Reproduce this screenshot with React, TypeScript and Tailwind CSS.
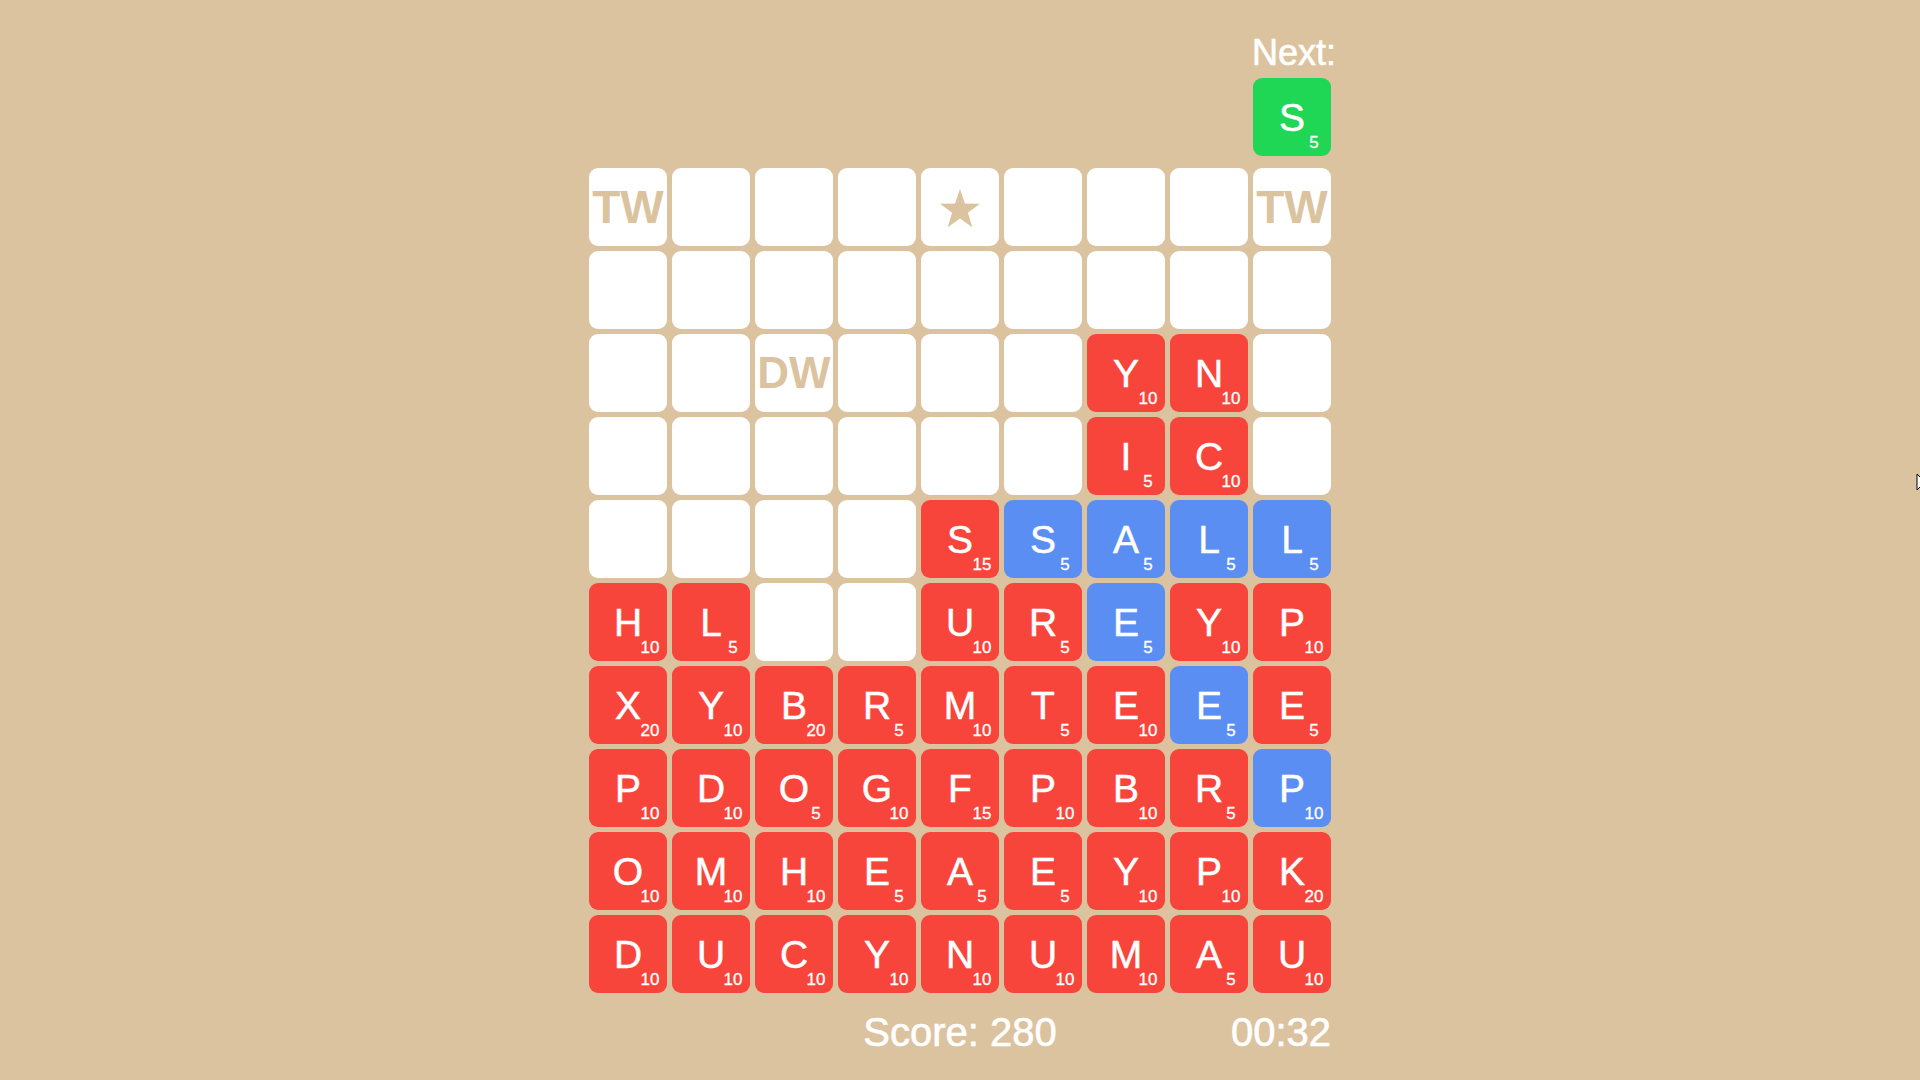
import React from "react";

type Cell =
  | { t: "empty" }
  | { t: "tw" }
  | { t: "dw" }
  | { t: "star" }
  | { t: "tile"; l: string; n: number; c: "r" | "b" };

const E: Cell = { t: "empty" };
const TW: Cell = { t: "tw" };
const DW: Cell = { t: "dw" };
const ST: Cell = { t: "star" };
const r = (l: string, n: number): Cell => ({ t: "tile", l, n, c: "r" });
const b = (l: string, n: number): Cell => ({ t: "tile", l, n, c: "b" });

const grid: Cell[][] = [
  [TW, E, E, E, ST, E, E, E, TW],
  [E, E, E, E, E, E, E, E, E],
  [E, E, DW, E, E, E, r("Y", 10), r("N", 10), E],
  [E, E, E, E, E, E, r("I", 5), r("C", 10), E],
  [E, E, E, E, r("S", 15), b("S", 5), b("A", 5), b("L", 5), b("L", 5)],
  [r("H", 10), r("L", 5), E, E, r("U", 10), r("R", 5), b("E", 5), r("Y", 10), r("P", 10)],
  [r("X", 20), r("Y", 10), r("B", 20), r("R", 5), r("M", 10), r("T", 5), r("E", 10), b("E", 5), r("E", 5)],
  [r("P", 10), r("D", 10), r("O", 5), r("G", 10), r("F", 15), r("P", 10), r("B", 10), r("R", 5), b("P", 10)],
  [r("O", 10), r("M", 10), r("H", 10), r("E", 5), r("A", 5), r("E", 5), r("Y", 10), r("P", 10), r("K", 20)],
  [r("D", 10), r("U", 10), r("C", 10), r("Y", 10), r("N", 10), r("U", 10), r("M", 10), r("A", 5), r("U", 10)],
];

function LetterTile({ l, n, bg }: { l: string; n: number; bg: string }) {
  return (
    <div className={`relative w-[78px] h-[78px] rounded-[9px] flex items-center justify-center text-white ${bg}`}>
      <span className="text-[39px] leading-none [-webkit-text-stroke:0.5px_white]">{l}</span>
      <span className="absolute right-0 bottom-[5px] w-[34px] text-center text-[17px] leading-none [-webkit-text-stroke:0.3px_white]">{n}</span>
    </div>
  );
}

function CellView({ cell }: { cell: Cell }) {
  if (cell.t === "tile") {
    return <LetterTile l={cell.l} n={cell.n} bg={cell.c === "r" ? "bg-[#f7453b]" : "bg-[#5a8ef3]"} />;
  }
  return (
    <div className="w-[78px] h-[78px] rounded-[9px] bg-white flex items-center justify-center text-[#dcc3a0]">
      {cell.t === "tw" && <span className="text-[46px] font-bold leading-none">TW</span>}
      {cell.t === "dw" && <span className="text-[44px] font-bold leading-none">DW</span>}
      {cell.t === "star" && (
        <svg className="mt-[4px]" width="42" height="40" viewBox="0 0 42 40">
          <polygon
            fill="#dcc3a0"
            points="21,0 25.9,14.5 41,14.7 28.9,23.7 33.3,38.3 21,29.6 8.7,38.3 13.1,23.7 1,14.7 16.1,14.5"
          />
        </svg>
      )}
    </div>
  );
}

export default function App() {
  return (
    <div
      className="relative w-screen h-screen overflow-hidden bg-[#dcc3a0] flex flex-col items-center"
      style={{ fontFamily: '"Liberation Sans", Arial, sans-serif' }}
    >
      <div className="w-[742px] flex flex-col pt-[35px]">
        <div className="flex justify-end">
          <span className="text-white text-[36px] leading-[35px] h-[35px] [-webkit-text-stroke:0.6px_white] mr-[-5px]">Next:</span>
        </div>
        <div className="flex justify-end mt-[8px]">
          <LetterTile l="S" n={5} bg="bg-[#1fd655]" />
        </div>
        <div className="mt-[12px] grid grid-cols-9 gap-[5px]">
          {grid.flatMap((row, i) => row.map((cell, j) => <CellView key={`${i}-${j}`} cell={cell} />))}
        </div>
        <div className="relative mt-[19px] h-[40px] flex items-center justify-center text-white text-[40px] leading-[40px] [-webkit-text-stroke:0.6px_white]">
          <span>Score: 280</span>
          <span className="absolute right-0 top-0">00:32</span>
        </div>
      </div>
      <svg className="absolute left-[1916px] top-[473px]" width="14" height="22" viewBox="0 0 14 22">
        <path d="M1 1 L1 17 L5 13 L8 20 L10 19 L7 12 L12 12 Z" fill="white" stroke="black" strokeWidth="1" />
      </svg>
    </div>
  );
}
